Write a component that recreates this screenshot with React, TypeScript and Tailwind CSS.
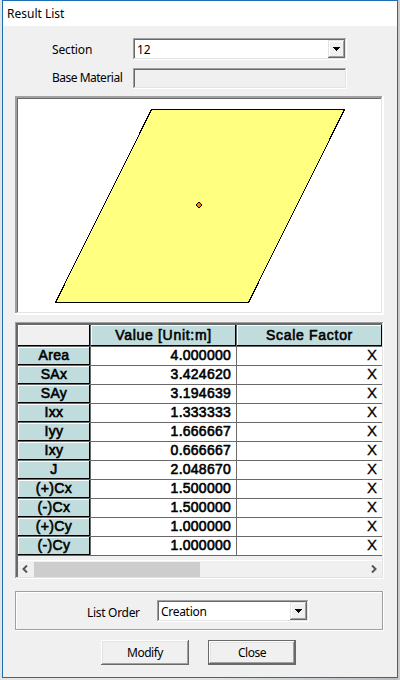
import React from "react";

const sunken =
  "shadow-[inset_-1px_-1px_0_#fff,inset_1px_1px_0_#a0a0a0,inset_-2px_-2px_0_#e3e3e3,inset_2px_2px_0_#696969]";
const raised =
  "shadow-[inset_-1px_-1px_0_#696969,inset_1px_1px_0_#fff,inset_-2px_-2px_0_#a0a0a0,inset_2px_2px_0_#e3e3e3]";
const label = "whitespace-nowrap text-[12px] leading-[14px]";

const rows: [string, string][] = [
  ["Area", "4.000000"],
  ["SAx", "3.424620"],
  ["SAy", "3.194639"],
  ["Ixx", "1.333333"],
  ["Iyy", "1.666667"],
  ["Ixy", "0.666667"],
  ["J", "2.048670"],
  ["(+)Cx", "1.500000"],
  ["(-)Cx", "1.500000"],
  ["(+)Cy", "1.000000"],
  ["(-)Cy", "1.000000"],
];

function Combo({ value, className }: { value: string; className: string }) {
  return (
    <div className={`flex h-[22px] justify-between bg-white p-[2px] ${sunken} ${className}`}>
      <span className={`pl-[2px] pt-[3px] ${label}`}>{value}</span>
      <button className="flex h-[18px] w-[17px] items-center justify-center bg-[#f0f0f0] shadow-[inset_-1px_-1px_0_#696969,inset_1px_1px_0_#e3e3e3,inset_-2px_-2px_0_#a0a0a0,inset_2px_2px_0_#fff]">
        <svg width="7" height="4" shapeRendering="crispEdges">
          <path d="M0 0h7v1h-1v1h-1v1h-1v1h-1v-1h-1v-1h-1v-1h-1z" />
        </svg>
      </button>
    </div>
  );
}

function HeaderCell({ text, className }: { text: string; className: string }) {
  return (
    <div
      className={`h-[22px] border-b border-r border-[#696969] text-center leading-[21px] tracking-[0.7px] shadow-[inset_-1px_-1px_0_#000,inset_1px_1px_0_#fff] ${className}`}
    >
      {text}
    </div>
  );
}

export default function App() {
  return (
    <div className="h-[680px] w-[400px] overflow-hidden bg-[linear-gradient(90deg,#e4e4e4_0,#e4e4e4_50%,#b9bdbf_99%,#cfcfcf_100%)] pl-[2px] font-['Noto_Sans','DejaVu_Sans',sans-serif] text-black">
      <div className="flex h-[678px] w-[396px] flex-col border border-[#1a6fb4] bg-[#f0f0f0]">
        <div className="flex h-[25px] shrink-0 bg-white pl-[4px] pt-[6px]">
          <span className={label}>Result List</span>
        </div>

        <div className="mt-[12px] flex h-[22px] shrink-0">
          <span className={`ml-[49px] w-[81px] pt-[5px] tracking-[-0.15px] ${label}`}>Section</span>
          <Combo value="12" className="w-[214px]" />
        </div>
        <div className="mt-[8px] flex h-[21px] shrink-0">
          <span className={`ml-[49px] w-[81px] pt-[3px] tracking-[-0.5px] ${label}`}>Base Material</span>
          <div className={`w-[214px] ${sunken}`} />
        </div>

        <div className="ml-[12px] mt-[7px] h-[219px] w-[369px] shrink-0 bg-white p-[3px] shadow-[inset_-2px_-2px_0_#fff,inset_2px_2px_0_#a0a0a0,inset_-3px_-3px_0_#e3e3e3,inset_3px_3px_0_#696969]">
          <svg width="363" height="213" viewBox="18 99 363 213" shapeRendering="crispEdges">
            <path d="M151.5 109.5H344.5L248.5 302.5H55.5Z" fill="#ffff80" stroke="#000" />
            <path d="M198 202h2v1h1v1h1v2h-1v1h-1v1h-2v-1h-1v-1h-1v-2h1v-1h1z" fill="#000" />
            <path d="M198 203h2v1h1v2h-1v1h-2v-1h-1v-2h1z" fill="#ff8000" />
          </svg>
        </div>

        <div className="ml-[12px] mt-[7px] flex h-[257px] w-[369px] shrink-0 flex-col pl-[3px] pr-[2px] pt-[3px] shadow-[inset_-1px_-1px_0_#fff,inset_1px_1px_0_#a0a0a0,inset_-2px_-2px_0_#e3e3e3,inset_3px_3px_0_#696969]">
          <div className="font-['Liberation_Sans',Arial,sans-serif] text-[14px] [-webkit-text-stroke:0.6px_black]">
            <div className="flex">
              <HeaderCell text="" className="w-[73px] bg-[#f0f0f0]" />
              <HeaderCell text="Value [Unit:m]" className="w-[146px] bg-[#c0dcdc]" />
              <HeaderCell text="Scale Factor" className="w-[145px] border-r-0 bg-[#c0dcdc]" />
            </div>
            {rows.map(([name, value]) => (
              <div key={name} className="flex h-[19px] bg-white leading-[16px]">
                <div className="w-[73px] border-b border-r border-[#696969] bg-[#c0dcdc] text-center tracking-[0.35px] shadow-[inset_-1px_-1px_0_#000,inset_1px_1px_0_#fff]">
                  {name}
                </div>
                <div className="w-[146px] border-b border-r border-[#696969] pr-[5px] text-right tracking-[0.25px]">
                  {value}
                </div>
                <div className="w-[145px] border-b border-[#696969] pr-[5px] text-right text-[15px] leading-[16px] [-webkit-text-stroke:0.3px_black]">
                  X
                </div>
              </div>
            ))}
          </div>
          <div className="mt-[4px] flex h-[17px] items-center border-t border-white">
            <svg className="ml-[4px] mr-[6px]" width="6" height="8" fill="none" stroke="#555" strokeWidth="2">
              <path d="M5 .5 1.5 4 5 7.5" />
            </svg>
            <div className="h-[15px] w-[166px] bg-[#cdcdcd]" />
            <svg className="ml-auto mr-[5px]" width="6" height="8" fill="none" stroke="#555" strokeWidth="2">
              <path d="M1 .5 4.5 4 1 7.5" />
            </svg>
          </div>
        </div>

        <div className="ml-[12px] mt-[12px] flex h-[40px] w-[369px] shrink-0 pt-[9px] shadow-[inset_-1px_-1px_0_#fff,inset_1px_1px_0_#a0a0a0,inset_-2px_-2px_0_#a0a0a0,inset_2px_2px_0_#fff]">
          <span className={`ml-[72px] w-[70px] pt-[6px] tracking-[-0.3px] ${label}`}>List Order</span>
          <Combo value="Creation" className="w-[152px] tracking-[-0.3px]" />
        </div>

        <div className="ml-[98px] mt-[9px] flex h-[25px] shrink-0 gap-[19px]">
          <button className={`w-[88px] tracking-[-0.5px] ${raised} ${label}`}>Modify</button>
          <button
            className={`w-[88px] tracking-[-0.45px] shadow-[inset_0_0_0_1px_#696969,inset_-2px_-2px_0_#696969,inset_2px_2px_0_#fff,inset_-3px_-3px_0_#a0a0a0,inset_3px_3px_0_#e3e3e3] ${label}`}
          >
            Close
          </button>
        </div>
      </div>
    </div>
  );
}
